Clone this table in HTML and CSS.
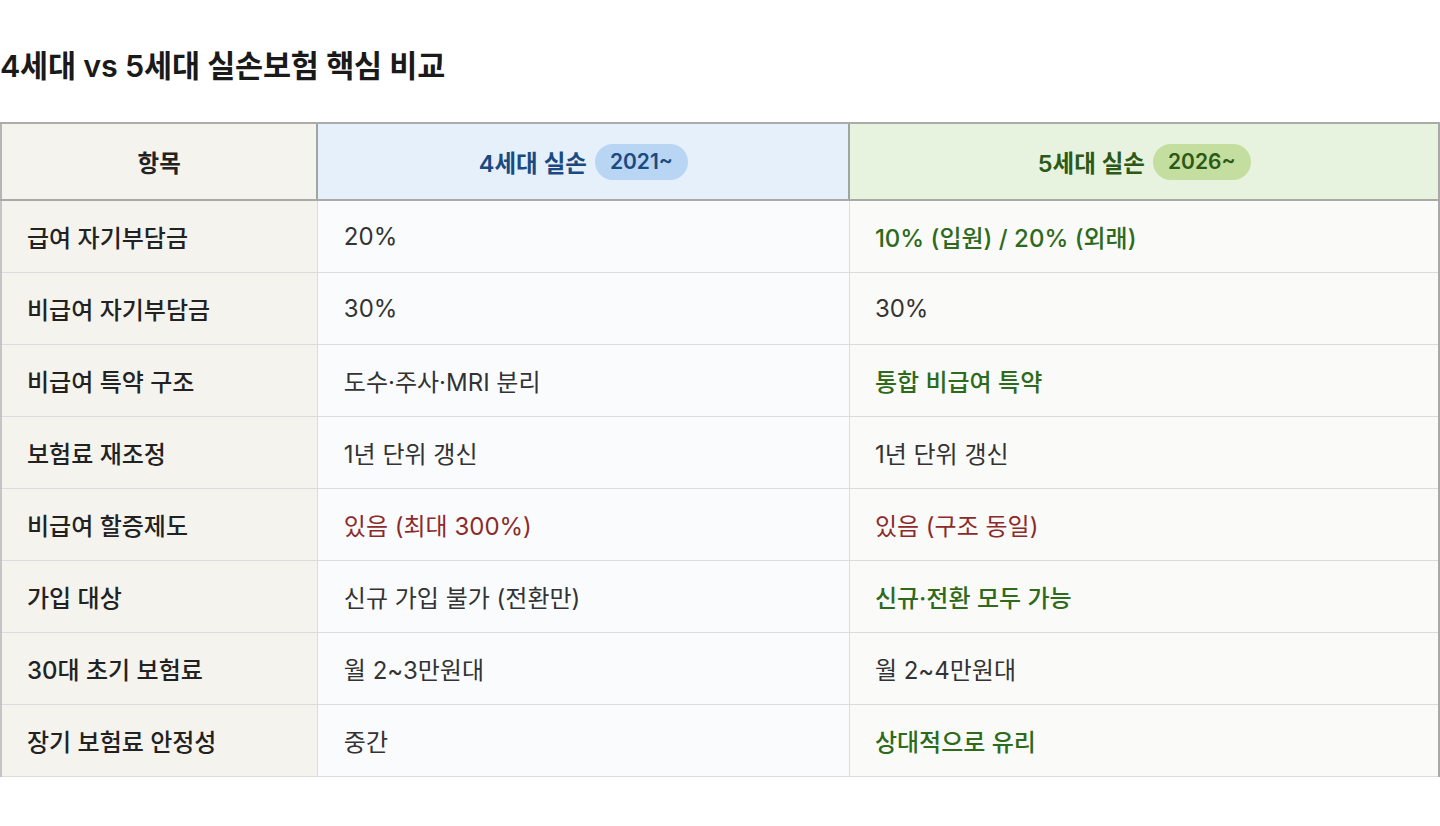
FILE: index.html
```html
<!DOCTYPE html>
<html lang="ko">
<head>
<meta charset="utf-8">
<link rel="stylesheet" href="styles.css">
</head>
<body>
<h2 class="title">4세대 vs 5세대 실손보험 핵심 비교</h2>
<table class="cmp">
  <colgroup>
    <col class="c1"><col class="c2"><col class="c3">
  </colgroup>
  <thead>
    <tr>
      <th class="h-item">항목</th>
      <th class="h-4"><span class="hl">4세대 실손</span><span class="badge b4">2021~</span></th>
      <th class="h-5"><span class="hl">5세대 실손</span><span class="badge b5">2026~</span></th>
    </tr>
  </thead>
  <tbody>
    <tr><td class="k">급여 자기부담금</td><td class="v4">20%</td><td class="v5 good">10% (입원) / 20% (외래)</td></tr>
    <tr><td class="k">비급여 자기부담금</td><td class="v4">30%</td><td class="v5">30%</td></tr>
    <tr><td class="k">비급여 특약 구조</td><td class="v4">도수·주사·MRI 분리</td><td class="v5 good">통합 비급여 특약</td></tr>
    <tr><td class="k">보험료 재조정</td><td class="v4">1년 단위 갱신</td><td class="v5">1년 단위 갱신</td></tr>
    <tr><td class="k">비급여 할증제도</td><td class="v4 bad">있음 (최대 300%)</td><td class="v5 bad">있음 (구조 동일)</td></tr>
    <tr><td class="k">가입 대상</td><td class="v4">신규 가입 불가 (전환만)</td><td class="v5 good">신규·전환 모두 가능</td></tr>
    <tr><td class="k">30대 초기 보험료</td><td class="v4">월 2~3만원대</td><td class="v5">월 2~4만원대</td></tr>
    <tr><td class="k">장기 보험료 안정성</td><td class="v4">중간</td><td class="v5 good">상대적으로 유리</td></tr>
  </tbody>
</table>
</body>
</html>
```
FILE: styles.css
```css
html, body {
  margin: 0;
  padding: 0;
  background: #ffffff;
}
body {
  font-family: "Inter", "Noto Sans CJK KR", sans-serif;
  color: #222;
}
.title {
  margin: 48px 0 38px 0;
  font-size: 30.5px;
  line-height: 36px;
  font-weight: 600;
  color: #1a1a1a;
  letter-spacing: -0.2px;
}
.cmp {
  width: 100%;
  border-collapse: collapse;
  font-size: 24px;
  border-left: 2px solid #c4c4c4;
  border-right: 2px solid #a9a9a9;
}
.c1 { width: 22%; }
.c2 { width: 37%; }
.c3 { width: 41%; }
.cmp th {
  height: 75px;
  padding: 0;
  font-size: 23.5px;
  font-weight: 600;
  text-align: center;
  border-top: 2px solid #ababab;
  border-bottom: 2px solid #a8aaa8;
  border-left: 2px solid #9fa59f;
}
.cmp th:first-child { border-left: 2px solid #b5b5b5; }
.h-item { background: #f4f3ee; color: #222; }
.h-4 { background: #e6f0fa; color: #1b4a82; }
.h-5 { background: #e8f3df; color: #2b5a18; }
.hl { vertical-align: middle; }
.badge {
  display: inline-block;
  vertical-align: middle;
  margin-left: 8px;
  padding: 0 15px;
  height: 36px;
  line-height: 36px;
  border-radius: 18px;
  font-size: 21px;
  font-weight: 600;
}
.b4 { background: #b8d5f3; color: #1b4a82; }
.b5 { background: #c3de9e; color: #2b5a18; }
.cmp td {
  height: 71px;
  padding: 0 0 0 26px;
  border-bottom: 1px solid #dcdcdc;
  border-left: 1px solid #dcdcdc;
  color: #333;
  font-weight: 400;
}
.cmp td.k {
  background: #f4f3ee;
  font-weight: 500;
  color: #222;
  padding-left: 25px;
  border-left: 2px solid #c4c4c4;
}
.cmp td.v4 { background: #fafbfd; }
.cmp td.v5 { background: #fafaf8; padding-left: 25px; }
.cmp td.good { color: #2d6a1c; font-weight: 500; }
.cmp td.bad { color: #8b2b2b; font-weight: 400; }
```
